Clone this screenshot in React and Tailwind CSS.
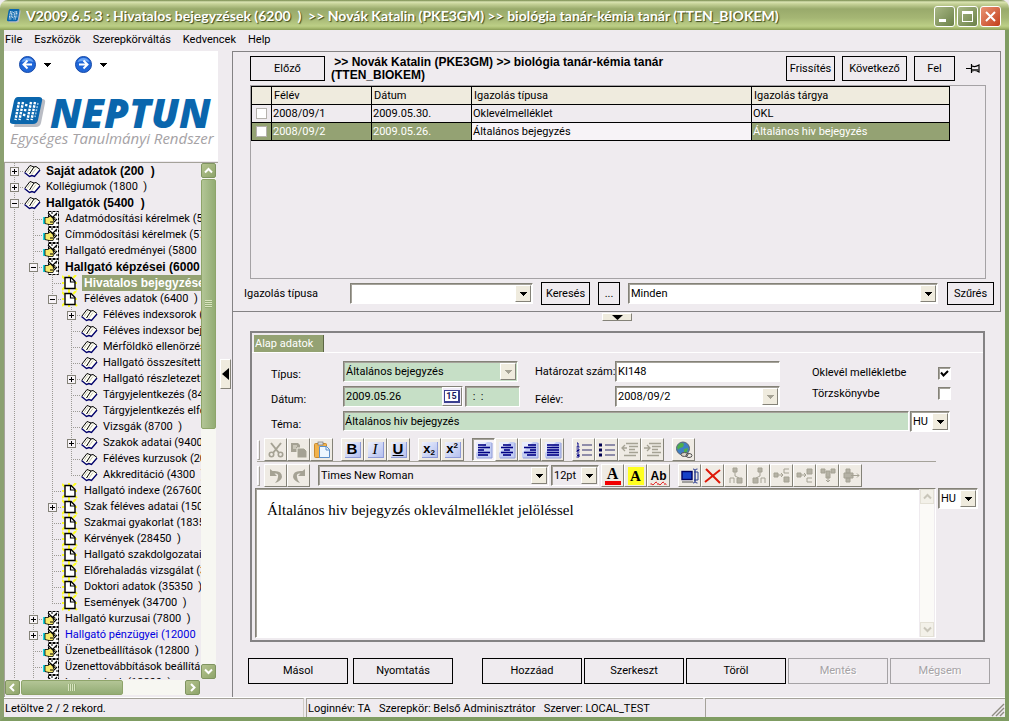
import { useState } from 'react';
import clsx from 'clsx';

// 3D edges of the classic controls
const SUNKEN = 'border border-t-[#848278] border-l-[#848278] border-r-white border-b-white shadow-[inset_1px_1px_0_#a5a29a]';
const RAISED = 'border border-t-white border-l-white border-r-[#848278] border-b-[#848278]';

const TREE = [
  { depth: 0, icon: 'book', label: 'Saját adatok (200  )', toggle: '+', bold: true },
  { depth: 0, icon: 'book', label: 'Kollégiumok (1800  )', toggle: '+' },
  { depth: 0, icon: 'book', label: 'Hallgatók (5400  )', toggle: '-', bold: true },
  { depth: 1, icon: 'hand', label: 'Adatmódosítási kérelmek (56' },
  { depth: 1, icon: 'hand', label: 'Címmódosítási kérelmek (57' },
  { depth: 1, icon: 'hand', label: 'Hallgató eredményei (5800  )' },
  { depth: 1, icon: 'hand', label: 'Hallgató képzései (6000', toggle: '-', bold: true },
  { depth: 2, icon: 'page', label: 'Hivatalos bejegyzése', bold: true, selected: true },
  { depth: 2, icon: 'page', label: 'Féléves adatok (6400  )', toggle: '-' },
  { depth: 3, icon: 'book', label: 'Féléves indexsorok (', toggle: '+' },
  { depth: 3, icon: 'book', label: 'Féléves indexsor bej' },
  { depth: 3, icon: 'book', label: 'Mérföldkö ellenörzés' },
  { depth: 3, icon: 'book', label: 'Hallgató összesített' },
  { depth: 3, icon: 'book', label: 'Hallgató részletezett', toggle: '+' },
  { depth: 3, icon: 'book', label: 'Tárgyjelentkezés (84' },
  { depth: 3, icon: 'book', label: 'Tárgyjelentkezés elfo' },
  { depth: 3, icon: 'book', label: 'Vizsgák (8700  )' },
  { depth: 3, icon: 'book', label: 'Szakok adatai (9400', toggle: '+' },
  { depth: 3, icon: 'book', label: 'Féléves kurzusok (20' },
  { depth: 3, icon: 'book', label: 'Akkreditáció (4300  )', last: true },
  { depth: 2, icon: 'page', label: 'Hallgató indexe (267600' },
  { depth: 2, icon: 'page', label: 'Szak féléves adatai (150', toggle: '+' },
  { depth: 2, icon: 'page', label: 'Szakmai gyakorlat (1835' },
  { depth: 2, icon: 'page', label: 'Kérvények (28450  )' },
  { depth: 2, icon: 'page', label: 'Hallgató szakdolgozatai' },
  { depth: 2, icon: 'page', label: 'Előrehaladás vizsgálat (3' },
  { depth: 2, icon: 'page', label: 'Doktori adatok (35350  )' },
  { depth: 2, icon: 'page', label: 'Események (34700  )', last: true },
  { depth: 1, icon: 'hand', label: 'Hallgató kurzusai (7800  )', toggle: '+' },
  { depth: 1, icon: 'hand', label: 'Hallgató pénzügyei (12000  )', toggle: '+', link: true },
  { depth: 1, icon: 'hand', label: 'Üzenetbeállítások (12800  )' },
  { depth: 1, icon: 'hand', label: 'Üzenettovábbítások beállítá' },
  { depth: 1, icon: 'hand', label: 'Levelezések (13800  )' },
];

const ROWS = [
  { term: '2008/09/1', date: '2009.05.30.', type: 'Oklevélmelléklet', subject: 'OKL' },
  { term: '2008/09/2', date: '2009.05.26.', type: 'Általános bejegyzés', subject: 'Általános hiv bejegyzés' },
];

/* ---------- icons ---------- */

const BookIcon = () => (
  <svg width="17" height="14" viewBox="0 0 17 14" aria-hidden="true">
    <path d="M1 8 6 1.500 10 3l2-.5 4 3-5.500 6.500L8 11l-2.500 1z" fill="#fffff4" />
    <path d="M1 8 6 1.500 10 3l2-.5 4 3M10 3 5.500 10" fill="none" stroke="#000" strokeWidth="1" />
    <path d="M.5 8.500 5.500 12.500 8 11.500l2.500 1L16 6" fill="none" stroke="#00006b" strokeWidth="1.400" />
    <path d="M7.500 10.500 12 4.500M3 8.500l4.500-6" stroke="#b5b2a5" strokeWidth=".8" />
  </svg>
);

const HandIcon = () => (
  <svg width="17" height="16" viewBox="0 0 17 16" aria-hidden="true">
    <path d="M5.500.5h10v15h-10z" fill="#fff" stroke="#000" strokeDasharray="3 1" />
    <path d="M0 6h3v7H0z" fill="#19d3df" />
    <path d="M2 6.500h3l3-2 1 2h3v2h-2l1 2-1 3H6l-4-1z" fill="#f7e96b" stroke="#000" strokeWidth=".8" />
    <path d="m5 2 6 6M14 2 9 7m5 1-3 3M7 11h3M12 4h2M13 12h2M8 2h2" stroke="#000" strokeWidth="1.100" />
  </svg>
);

const PageIcon = () => (
  <svg width="16" height="16" viewBox="0 0 16 16" aria-hidden="true">
    <path d="m0 1 3 3M14 0l-3 3M0 15l3-3M15 15l-3-3M7 0v2M0 8h2M15 8h-2M7 16v-2" stroke="#ffff21" strokeWidth="2" />
    <path d="M3 2.500h6l4 4v7H3z" fill="#fff" stroke="#000" strokeWidth="1.400" />
    <path d="M8.500 2.500v4.500H13" fill="none" stroke="#000" strokeWidth="1.200" />
  </svg>
);

const TREE_ICONS = { book: BookIcon, hand: HandIcon, page: PageIcon };

const Caret = ({ color = '#000' }) => (
  <svg width="7" height="4" viewBox="0 0 7 4" shapeRendering="crispEdges" aria-hidden="true">
    <path d="M0 0h7L3.500 4z" fill={color} />
  </svg>
);

const NeptunMark = ({ width, height }) => (
  <svg width={width} height={height} viewBox="0 0 36 31" preserveAspectRatio="none" className="shrink-0" aria-hidden="true">
    <path d="M9 2h23q4 0 3 4l-4 20q-1 4-5 4H4z" fill="#b9bcc4" />
    <path d="M8 0h21q4 0 3 4l-4 19q-1 4-5 4H3q-4 0-3-4L4 4q1-4 4-4z" fill="#0a66ad" />
    <path d="M9 5 5.500 23M13 5 9.500 23M25 5l-3.500 18M21 5l-3.500 18" stroke="#fff" strokeWidth="2.400" strokeDasharray="2.400 1" />
    <path d="m16.500 7-3 14" stroke="#fff" strokeWidth="2.400" strokeDasharray="2.400 2.600" />
    <path d="M28 6l-3 14" stroke="#9cc4e4" strokeWidth="1.500" strokeDasharray="2 1.200" />
  </svg>
);

const RoundArrow = ({ back }) => (
  <svg width="17" height="17" viewBox="0 0 17 17" aria-hidden="true">
    <circle cx="8.500" cy="8.500" r="8" fill="#1f66d8" stroke="#174aa8" />
    <path d="M2.500 6a6.500 6.500 0 0 1 12 0q-6-2-12 0z" fill="#6ba5f5" />
    <path
      d={back ? 'M13 8.500H5M8.500 4.500l-4 4 4 4' : 'M4 8.500h8M8.500 4.500l4 4-4 4'}
      fill="none" stroke="#fff" strokeWidth="2"
    />
  </svg>
);

const PinIcon = () => (
  <svg width="15" height="11" viewBox="0 0 15 11" aria-hidden="true">
    <path d="M0 5.500h5M5.500 1v9M6 3q3 1.500 7-1v7q-4-2.500-7-1" stroke="#000" strokeWidth="1.200" fill="none" />
    <path d="M6 6h7v2H6z" fill="#444" />
  </svg>
);

const Chevron = ({ dir, color = '#fff' }) => (
  <svg width="9" height="9" viewBox="0 0 9 9" fill="none" stroke={color} strokeWidth="2" aria-hidden="true">
    {dir === 'up' && <path d="M1 6.500 4.500 3 8 6.500" />}
    {dir === 'down' && <path d="M1 2.500 4.500 6 8 2.500" />}
    {dir === 'left' && <path d="M6 1 2.500 4.500 6 8" />}
    {dir === 'right' && <path d="M3 1l3.500 3.500L3 8" />}
  </svg>
);

const Ico = ({ children }) => (
  <svg width="18" height="18" viewBox="0 0 18 18" fill="none" aria-hidden="true">{children}</svg>
);

const BlueTile = ({ children }) => (
  <Ico>
    <rect x="1" y="1" width="16" height="16" rx="1" fill="#c3cdf3" />
    <path d="M1 1h11L1 12z" fill="#e9edfc" />
    <path d="M17 2v15H2" stroke="#8e9bd8" />
    {children}
  </Ico>
);

const GRAY = '#a5a294';

const GlyphTile = ({ children, className }) => (
  <span className={clsx("flex size-4 items-center justify-center border-r border-b border-[#8e9bd8] bg-linear-to-br from-[#eef1fd] to-[#b5c0ee] font-['Liberation_Sans',sans-serif] leading-4 text-black", className)}>
    {children}
  </span>
);

const CutIcon = () => (
  <Ico>
    <path d="m4 2 8 10M14 2 6 12" stroke={GRAY} strokeWidth="2" />
    <circle cx="4.500" cy="13.500" r="2.200" stroke={GRAY} strokeWidth="1.600" />
    <circle cx="13.500" cy="13.500" r="2.200" stroke={GRAY} strokeWidth="1.600" />
  </Ico>
);

const CopyIcon = () => (
  <Ico>
    <path d="M1 2h7l2 2v7H1z" fill={GRAY} />
    <path d="M7 7h7l3 3v7H7z" fill={GRAY} stroke="#f2efe4" />
    <path d="M3 5h4M3 7h3" stroke="#efebde" />
  </Ico>
);

const PasteIcon = () => (
  <Ico>
    <rect x="1.500" y="2.500" width="12" height="14" rx="1" fill="#f2b24a" stroke="#c98a2e" />
    <rect x="5" y="1" width="5" height="3" fill="#dedede" stroke="#777" strokeWidth=".7" />
    <path d="M6.500 5.500h7l3 3v8h-10z" fill="#eef7ff" stroke="#5c8fc9" />
    <path d="M13 5.500v3.500h3.500" stroke="#5c8fc9" />
  </Ico>
);

const AlignIcon = ({ lines }) => (
  <BlueTile>
    {lines.map(([x1, x2], i) => (
      <path key={i} d={`M${x1} ${4 + i * 2.5}H${x2}`} stroke="#000084" strokeWidth="1.600" />
    ))}
  </BlueTile>
);

const ALIGN_LEFT = [[3, 11], [3, 15], [3, 9], [3, 15], [3, 13]];
const ALIGN_CENTER = [[5, 13], [3, 15], [6, 12], [3, 15], [5, 13]];
const ALIGN_RIGHT = [[7, 15], [3, 15], [9, 15], [3, 15], [6, 15]];
const ALIGN_FULL = [[3, 15], [3, 15], [3, 15], [3, 15], [3, 15]];

const NumberedIcon = () => (
  <Ico>
    <path d="M7 4h10M7 9h10M7 14h10" stroke="#2f2f6e" strokeWidth="1.200" />
    <path d="M2 2h1v4M1.500 6h3M1.500 8H4v1.500H2V11h2.500M1.500 13H4v3H1.500M2 14.500h2" stroke="#000084" />
  </Ico>
);

const BulletIcon = () => (
  <Ico>
    <path d="M7 4h10M7 9h10M7 14h10" stroke="#2f2f6e" strokeWidth="1.200" />
    <path d="M1 2.500h3v3H1zM1 7.500h3v3H1zM1 12.500h3v3H1z" fill="#000050" />
  </Ico>
);

const IndentIcon = ({ right }) => (
  <Ico>
    <path d="M5 2.500h12M8 5.500h9M8 8.500h6M8 11.500h9M3 14.500h12" stroke={GRAY} strokeWidth="1.300" />
    <path d={right ? 'M0 7h5M3 4l3 3-3 3' : 'M6 7H1M4 4 1 7l3 3'} stroke={GRAY} strokeWidth="1.300" />
  </Ico>
);

const GlobeIcon = () => (
  <Ico>
    <circle cx="8" cy="7.500" r="6.500" fill="#3d7fc4" stroke="#5a6470" />
    <path d="M4 3q3-2 5 0l-1 3-3 1-2 2-1-3zM9 8l4-1-1 4-3 2z" fill="#4fae4a" />
    <ellipse cx="9.500" cy="13.500" rx="3.500" ry="2" fill="#d8d4c8" stroke="#555" />
    <ellipse cx="14" cy="14.500" rx="3" ry="2" stroke="#555" />
  </Ico>
);

const UndoIcon = ({ flip }) => (
  <Ico>
    <path
      d={flip ? 'M15 2v7H8l2.500-2.500Q6 6 7 10q0 3 3 6-6-2-7-6 0-7 9.500-6z' : 'M3 2v7h7L7.500 6.500Q12 6 11 10q0 3-3 6 6-2 7-6 0-7-9.500-6z'}
      fill={GRAY}
    />
  </Ico>
);

const ObjectIcon = () => (
  <Ico>
    <rect x="1" y="4.500" width="10" height="8" fill="#1640c8" stroke="#000060" strokeWidth="1.400" />
    <path d="M1 15h11" stroke="#555" />
    <path d="M12 2q2 0 2 1.500v11q0 1.500-2 1.500M16.500 2Q14 2 14 3.500v11q0 1.500 2.500 1.500M13 5h4v8h-4" stroke="#2b3c90" />
  </Ico>
);

const DeleteIcon = () => (
  <Ico><path d="m2 2 14 14M16 3 1 15" stroke="#de1808" strokeWidth="2" /></Ico>
);

// gray table commands, always disabled here
const TABLE_ICONS = [
  <g key="a"><path d="M6 1h4v4H6zM10 11h5v5h-5z" /><path d="M3 16v-5h4v5M8 5v4M8 9l4 2" fill="none" /></g>,
  <g key="b"><path d="M8 1h4v4H8zM3 11h5v5H3z" /><path d="M11 16v-5h4v5M10 5v4M10 9l-4 2" fill="none" /></g>,
  <g key="c"><path d="M1 6h4v4H1zM11 10h5v5h-5z" /><path d="M16 2h-5v4h5M5 8h5M8 6l2 2-2 2" fill="none" /></g>,
  <g key="d"><path d="M1 6h4v4H1zM11 2h5v5h-5z" /><path d="M16 11h-5v4h5M5 8h5M8 6l2 2-2 2" fill="none" /></g>,
  <g key="e"><path d="M2 2h4v4H2zM12 2h4v4h-4zM7 4h4v7H7z" /><path d="M9 9v6M7 13l2 2 2-2" fill="none" /></g>,
  <g key="f"><path d="M4 2h4v4H4zM4 11h4v4H4zM2 6h9v5H2z" /><path d="M9 8.500h8M15 6.500l2 2-2 2" fill="none" /></g>,
];

const SizeGrip = () => (
  <svg width="14" height="14" viewBox="0 0 14 14" aria-hidden="true">
    <path d="M1 13 13 1M5 13l8-8M9 13l4-4" stroke="#8f8c82" strokeWidth="1.400" />
  </svg>
);

/* ---------- controls ---------- */

const FlatButton = ({ children, className, disabled }) => (
  <button
    type="button"
    disabled={disabled}
    className={clsx(
      'shrink-0 border text-center',
      disabled ? 'border-[#a5a2a5] text-[#a5a2a5] [text-shadow:1px_1px_0_#fff]' : 'border-black',
      className,
    )}
  >
    {children}
  </button>
);

const Combo = ({ id, value, label, className, disabled, tone = 'bg-white' }) => (
  <div className={clsx('relative flex h-[21px] shrink-0', SUNKEN, tone, className)}>
    <select
      id={id}
      aria-label={label}
      disabled={disabled}
      className="w-full appearance-none bg-transparent pr-4 pl-[2px] text-black opacity-100 outline-none"
    >
      <option>{value}</option>
    </select>
    <span className={clsx('pointer-events-none absolute inset-y-px right-px flex w-4 items-center justify-center bg-[#efebde]', RAISED)}>
      <Caret color={disabled ? '#a5a294' : '#000'} />
    </span>
  </div>
);

const Check = ({ id, defaultChecked }) => (
  <span className={clsx('grid size-[13px] bg-white', SUNKEN)}>
    <input id={id} type="checkbox" defaultChecked={defaultChecked} className="peer col-start-1 row-start-1 size-[11px] appearance-none" />
    <svg viewBox="0 0 11 11" className="pointer-events-none invisible col-start-1 row-start-1 size-[11px] peer-checked:visible" aria-hidden="true">
      <path d="m2 4.500 2.500 3L9 3" stroke="#000" strokeWidth="2" fill="none" />
    </svg>
  </span>
);

const ToolButton = ({ label, pressed, disabled, children }) => (
  <button
    type="button"
    aria-label={label}
    disabled={disabled}
    className={clsx('flex h-[23px] w-[23px] shrink-0 items-center justify-center', pressed ? SUNKEN : RAISED, pressed ? 'bg-[#f7f3f7]' : 'bg-[#efebe4]')}
  >
    {children}
  </button>
);

const ToolGroup = ({ children }) => <div className="flex">{children}</div>;

const Grip = () => <span className="h-5 w-[3px] shrink-0 border border-t-white border-r-[#a5a29a] border-b-[#a5a29a] border-l-white" />;

const ScrollButton = ({ dir, label }) => (
  <button
    type="button"
    aria-label={label}
    className="flex size-[15px] shrink-0 items-center justify-center rounded-xs border border-[#7f9460] bg-linear-to-br from-[#b5c48f] to-[#8ea46a]"
  >
    <Chevron dir={dir} />
  </button>
);

/* ---------- window parts ---------- */

const TitleBar = () => (
  <header className="flex h-[30px] shrink-0 items-center rounded-t-lg bg-[linear-gradient(#74874a_0,#dbe4b4_2px,#c5d197_4px,#99aa6b_9px,#a5b674_18px,#bccf86_26px,#a8bb70_28px,#8a9e58_30px)] pt-[2px] pr-[8px] pl-[7px]">
    <NeptunMark width={14} height={14} />
    <h1 className="ml-[5px] flex-1 overflow-hidden font-['Lato','Open_Sans',sans-serif] text-[14px] leading-5 font-bold whitespace-pre text-white [text-shadow:1px_1px_1px_#3d4a1c]">
      {'V2009.6.5.3 : Hivatalos bejegyzések (6200  )  >> Novák Katalin (PKE3GM) >> biológia tanár-kémia tanár (TTEN_BIOKEM)'}
    </h1>
    <div className="flex gap-[2px]">
      <button type="button" aria-label="Minimize" className="flex size-[21px] items-end rounded-[3px] border border-white bg-linear-to-br from-[#a9b886] to-[#6c8148] pb-1 pl-1">
        <span className="h-[3px] w-[7px] bg-white" />
      </button>
      <button type="button" aria-label="Maximize" className="flex size-[21px] items-center justify-center rounded-[3px] border border-white bg-linear-to-br from-[#a9b886] to-[#6c8148]">
        <span className="size-[11px] border border-t-[3px] border-white" />
      </button>
      <button type="button" aria-label="Close" className="flex size-[21px] items-center justify-center rounded-[3px] border border-white bg-linear-to-br from-[#e89373] to-[#c23c14]">
        <svg width="11" height="11" viewBox="0 0 11 11" aria-hidden="true"><path d="m1 1 9 9M10 1l-9 9" stroke="#fff" strokeWidth="2" /></svg>
      </button>
    </div>
  </header>
);

const MenuBar = () => (
  <nav className="flex h-[21px] shrink-0 items-center gap-3 pb-[2px] pl-px">
    {['File', 'Eszközök', 'Szerepkörváltás', 'Kedvencek', 'Help'].map((item) => (
      <button key={item} type="button">{item}</button>
    ))}
  </nav>
);

// dotted connector in one indent cell
const Guide = ({ kind }) => (
  <svg width="19" height="16" viewBox="0 0 19 16" className="shrink-0" shapeRendering="crispEdges" aria-hidden="true">
    <path d={kind === 'last' ? 'M9.500 0v8' : 'M9.500 0v16'} stroke="#9c9a94" strokeDasharray="1 1" />
    {kind !== 'line' && <path d="M9 8.500h10" stroke="#9c9a94" strokeDasharray="1 1" />}
  </svg>
);

const Expander = ({ sign }) => (
  <svg width="19" height="16" viewBox="0 0 19 16" className="shrink-0" shapeRendering="crispEdges" aria-hidden="true">
    <path d="M9.500 0v16M9 8.500h10" stroke="#9c9a94" strokeDasharray="1 1" />
    <rect x="5.500" y="4.500" width="8" height="8" fill="#f7f3f7" stroke="#848278" />
    <path d={sign === '+' ? 'M7 8.500h5M9.500 6v5' : 'M7 8.500h5'} stroke="#000" />
  </svg>
);

const TreeRow = ({ node }) => {
  const Icon = TREE_ICONS[node.icon];
  return (
    <li className="flex h-4 items-center whitespace-pre">
      {Array.from({ length: node.depth }, (_, i) => <Guide key={i} kind="line" />)}
      {node.toggle ? <Expander sign={node.toggle} /> : <Guide kind={node.last ? 'last' : 'mid'} />}
      <span className="flex w-5 shrink-0"><Icon /></span>
      <span
        className={clsx(
          'h-4 flex-1 pl-[2px] leading-4',
          node.bold && "font-['Liberation_Sans',Arial,sans-serif] text-[12px] font-bold",
          node.selected && 'bg-[#94a273] text-white',
          node.link && 'text-[#0000e0]',
        )}
      >
        {node.label}
      </span>
    </li>
  );
};

const Sidebar = () => (
  <aside className="flex w-[214px] shrink-0 flex-col">
    <div className="h-[110px] shrink-0 bg-white">
      <div className="flex items-center pt-[5px] pl-[15px]">
        <button type="button" aria-label="Vissza"><RoundArrow back /></button>
        <span className="ml-2"><Caret /></span>
        <button type="button" aria-label="Előre" className="ml-[24px]"><RoundArrow /></button>
        <span className="ml-2"><Caret /></span>
      </div>
      <div className="mt-[22px] flex h-[35px] items-center gap-1 pl-[6px] font-['Open_Sans',sans-serif] italic">
        <NeptunMark width={36} height={31} />
        <span className="text-[40px] leading-[35px] font-extrabold text-[#0a66ad]">NEPTUN</span>
      </div>
      <p className="pl-[6px] font-['Open_Sans',sans-serif] text-[15px] leading-4 whitespace-nowrap text-[#a5a2a5] italic">
        Egységes Tanulmányi Rendszer
      </p>
    </div>
    <div className="mt-px flex min-h-0 flex-1 flex-col border-t border-l border-[#a5a29a] pr-[2px] pb-[2px]">
      <div className="flex min-h-0 flex-1">
        <ul className="h-0 min-h-full min-w-0 flex-1 overflow-hidden">
          {TREE.map((node) => <TreeRow key={node.label} node={node} />)}
        </ul>
        <div className="flex w-[15px] shrink-0 flex-col bg-[#f7f7f2]">
          <ScrollButton dir="up" label="Fel görget" />
          <div className="mt-px flex h-[250px] items-center justify-center rounded-xs border border-[#8ea46a] bg-linear-to-r from-[#b3c596] to-[#93ac74]">
            <span className="h-2 w-[7px] bg-[repeating-linear-gradient(#d9e4c0_0_1px,#93ac74_1px_2px)]" />
          </div>
          <div className="flex-1" />
          <ScrollButton dir="down" label="Le görget" />
        </div>
      </div>
      <div className="mt-px mr-4 flex h-[15px] shrink-0 bg-[#f7f7f2]">
        <ScrollButton dir="left" label="Balra görget" />
        <div className="ml-px flex w-[102px] items-center justify-center rounded-xs border border-[#8ea46a] bg-linear-to-b from-[#b3c596] to-[#93ac74]">
          <span className="h-[7px] w-2 bg-[repeating-linear-gradient(90deg,#d9e4c0_0_1px,#93ac74_1px_2px)]" />
        </div>
        <div className="flex-1" />
        <ScrollButton dir="right" label="Jobbra görget" />
      </div>
    </div>
  </aside>
);

const RecordList = () => {
  const [selected] = useState(1);
  return (
    <div className="h-[194px] border border-[#a5a2a5]">
      <table className="w-[699px] table-fixed border-collapse">
        <thead>
          <tr className="h-[18px] bg-[#efebde] text-left">
            <th className="w-5 border border-black" aria-label="Kijelölés" />
            <th className="w-[100px] border border-black px-[2px] leading-4 font-normal">Félév</th>
            <th className="w-[100px] border border-black px-[2px] leading-4 font-normal">Dátum</th>
            <th className="w-[280px] border border-black px-[2px] leading-4 font-normal">Igazolás típusa</th>
            <th className="border border-black px-[2px] leading-4 font-normal">Igazolás tárgya</th>
          </tr>
        </thead>
        <tbody>
          {ROWS.map((row, i) => (
            <tr key={row.term} className={clsx('h-[18px]', i === selected && 'bg-[#94a273] text-white')}>
              <td className="border border-black p-0">
                <input type="checkbox" aria-label={row.term} className="mx-auto block size-[11px] appearance-none border border-[#b5b2ad] bg-white" />
              </td>
              <td className="border border-black px-px leading-4">{row.term}</td>
              <td className="border border-black px-px leading-4">{row.date}</td>
              <td className={clsx('border border-black px-px leading-4', i === selected && 'bg-[#f7f3f7] text-black')}>{row.type}</td>
              <td className="border border-black px-px leading-4">{row.subject}</td>
            </tr>
          ))}
        </tbody>
      </table>
    </div>
  );
};

const ListPanel = () => (
  <section className="shrink-0 border border-l-0 border-[#848284] pt-1 pb-[6px]">
    <div className="flex items-start pr-[19px] pl-[17px]">
      <FlatButton className="h-[25px] w-[75px]">Előző</FlatButton>
      <p className="ml-[6px] w-[400px] font-['Liberation_Sans',Arial,sans-serif] text-[12px] leading-[13px] font-bold whitespace-pre-wrap">
        {' >> Novák Katalin (PKE3GM) >> biológia tanár-kémia tanár (TTEN_BIOKEM)'}
      </p>
      <div className="ml-auto flex items-center gap-[7px]">
        <FlatButton className="h-[25px] w-[49px]">Frissítés</FlatButton>
        <FlatButton className="h-[25px] w-[65px]">Következő</FlatButton>
        <FlatButton className="h-[25px] w-[41px]">Fel</FlatButton>
        <button type="button" aria-label="Rögzít" className="ml-1"><PinIcon /></button>
      </div>
    </div>
    <div className="mt-[3px] mr-[14px] ml-[17px]">
      <RecordList />
    </div>
    <div className="mt-[3px] flex items-center pr-[6px] pl-[11px]">
      <label htmlFor="kereses" className="w-[106px]">Igazolás típusa</label>
      <Combo id="kereses" value="" className="w-[183px]" />
      <FlatButton className="ml-2 h-[23px] w-[49px]">Keresés</FlatButton>
      <FlatButton className="ml-2 h-[23px] w-[22px]">...</FlatButton>
      <Combo label="Szűrő" value="Minden" className="ml-2 min-w-0 flex-1 shrink" />
      <FlatButton className="ml-[9px] h-[23px] w-[47px]">Szűrés</FlatButton>
    </div>
  </section>
);

const Toolbar = () => (
  <div className="flex flex-col gap-[2px]">
    <div className="mr-[4px] flex items-center gap-2 border-b border-[#a5a29a]">
      <div className="flex items-center gap-1">
        <Grip />
        <ToolGroup>
          <ToolButton label="Kivágás" disabled><CutIcon /></ToolButton>
          <ToolButton label="Másolás" disabled><CopyIcon /></ToolButton>
          <ToolButton label="Beillesztés"><PasteIcon /></ToolButton>
        </ToolGroup>
      </div>
      <ToolGroup>
        <ToolButton label="Félkövér"><GlyphTile className="text-[15px] font-bold">B</GlyphTile></ToolButton>
        <ToolButton label="Dőlt"><GlyphTile className="font-['Liberation_Serif',serif] text-[15px] italic">I</GlyphTile></ToolButton>
        <ToolButton label="Aláhúzott"><GlyphTile className="text-[15px] font-bold underline">U</GlyphTile></ToolButton>
      </ToolGroup>
      <ToolGroup>
        <ToolButton label="Alsó index"><GlyphTile className="text-[13px] font-bold">x<span className="self-end text-[8px] leading-[8px]">2</span></GlyphTile></ToolButton>
        <ToolButton label="Felső index"><GlyphTile className="text-[13px] font-bold">x<span className="self-start text-[8px] leading-[8px]">2</span></GlyphTile></ToolButton>
      </ToolGroup>
      <ToolGroup>
        <ToolButton label="Balra" pressed><AlignIcon lines={ALIGN_LEFT} /></ToolButton>
        <ToolButton label="Középre"><AlignIcon lines={ALIGN_CENTER} /></ToolButton>
        <ToolButton label="Jobbra"><AlignIcon lines={ALIGN_RIGHT} /></ToolButton>
        <ToolButton label="Sorkizárt"><AlignIcon lines={ALIGN_FULL} /></ToolButton>
      </ToolGroup>
      <ToolGroup>
        <ToolButton label="Számozás"><NumberedIcon /></ToolButton>
        <ToolButton label="Felsorolás"><BulletIcon /></ToolButton>
        <ToolButton label="Behúzás csökkentése" disabled><IndentIcon /></ToolButton>
        <ToolButton label="Behúzás növelése" disabled><IndentIcon right /></ToolButton>
      </ToolGroup>
      <ToolButton label="Hivatkozás"><GlobeIcon /></ToolButton>
    </div>
    <div className="flex items-center gap-2">
      <div className="flex items-center gap-1">
        <Grip />
        <ToolGroup>
          <ToolButton label="Visszavonás" disabled><UndoIcon /></ToolButton>
          <ToolButton label="Ismét" disabled><UndoIcon flip /></ToolButton>
        </ToolGroup>
      </div>
      <div className="flex items-center gap-[2px]">
        <Combo label="Betűtípus" value="Times New Roman" className="w-[231px]" tone="bg-[#efebef]" />
        <Combo label="Méret" value="12pt" className="w-[48px]" tone="bg-[#efebef]" />
        <ToolGroup>
          <ToolButton label="Betűszín">
            <span className="h-[18px] w-4 border-b-4 border-[#f00000] text-center font-['Liberation_Serif',serif] text-[16px] leading-[14px] font-bold">A</span>
          </ToolButton>
          <ToolButton label="Kiemelés">
            <span className="h-[18px] w-4 bg-[#ffff21] text-center font-['Liberation_Serif',serif] text-[15px] leading-[18px] font-bold">A</span>
          </ToolButton>
          <ToolButton label="Helyesírás">
            <span className="font-['Liberation_Sans',sans-serif] text-[12px] leading-[14px] font-bold underline decoration-[#e00000] decoration-wavy decoration-1">Ab</span>
          </ToolButton>
        </ToolGroup>
      </div>
      <ToolGroup>
        <ToolButton label="Objektum"><ObjectIcon /></ToolButton>
        <ToolButton label="Törlés"><DeleteIcon /></ToolButton>
        {TABLE_ICONS.map((icon, i) => (
          <ToolButton key={i} label={`Táblázat ${i + 1}`} disabled>
            <svg width="18" height="18" viewBox="0 0 18 18" fill="#b5b2a5" stroke="#a5a294" aria-hidden="true">{icon}</svg>
          </ToolButton>
        ))}
      </ToolGroup>
    </div>
  </div>
);

const Editor = () => (
  <div className={clsx('flex min-w-0 flex-1 bg-white', SUNKEN)}>
    <textarea
      aria-label="Szöveg"
      className="min-w-0 flex-1 resize-none overflow-hidden px-[11px] py-3 font-['Liberation_Serif',serif] text-[15px] leading-[18px] outline-none"
      defaultValue="Általános hiv bejegyzés okleválmelléklet jelöléssel"
    />
    <div className="flex w-4 shrink-0 flex-col justify-between border-x border-[#efebef] bg-[#fbfaf7]">
      <button type="button" aria-label="Fel görget" disabled className="flex h-[15px] items-center justify-center border border-[#e4e1d6] bg-[#f3f1e9]"><Chevron dir="up" color="#c9c6ba" /></button>
      <button type="button" aria-label="Le görget" disabled className="flex h-[15px] items-center justify-center border border-[#e4e1d6] bg-[#f3f1e9]"><Chevron dir="down" color="#c9c6ba" /></button>
    </div>
  </div>
);

const DetailForm = () => (
  <div className="grid grid-cols-[72px_177px_95px_165px_32px_126px_1fr] gap-y-[3px] pl-[17px]">
    <label htmlFor="tipus" className="pt-[6px]">Típus:</label>
    <Combo id="tipus" value="Általános bejegyzés" disabled className="mr-[2px]" tone="bg-[#c6dfc6]" />
    <label htmlFor="hatarozat" className="pt-[3px] pl-[15px] whitespace-nowrap">Határozat szám:</label>
    <input id="hatarozat" defaultValue="KI148" className={clsx('h-[21px] bg-white px-[2px]', SUNKEN)} />
    <span />
    <label htmlFor="oklevel" className="pt-1">Oklevél mellékletbe</label>
    <span className="pt-[6px]"><Check id="oklevel" defaultChecked /></span>

    <label htmlFor="datum" className="pt-[6px]">Dátum:</label>
    <div className="flex gap-[2px]">
      <div className={clsx('flex h-[21px] w-[120px] bg-[#c6dfc6]', SUNKEN)}>
        <input id="datum" defaultValue="2009.05.26" className="min-w-0 flex-1 px-[2px]" />
        <button type="button" aria-label="Naptár" className={clsx('flex w-5 items-center justify-center bg-[#efebf7]', RAISED)}>
          <span className="border border-r-2 border-b-2 border-[#3b3f8f] bg-white px-px text-[9px] leading-[10px] font-bold text-[#1a1a60]">15</span>
        </button>
      </div>
      <input aria-label="Idő" defaultValue=" :  :" className={clsx('h-[21px] w-[55px] bg-[#c6dfc6] px-1', SUNKEN)} />
    </div>
    <label htmlFor="felev" className="pt-[6px] pl-[15px]">Félév:</label>
    <Combo id="felev" value="2008/09/2" disabled />
    <span />
    <label htmlFor="torzskonyv">Törzskönyvbe</label>
    <span className="pt-px"><Check id="torzskonyv" /></span>

    <label htmlFor="tema" className="pt-[6px]">Téma:</label>
    <div className="col-span-6 flex gap-px pr-[32px]">
      <input id="tema" defaultValue="Általános hiv bejegyzés" className={clsx('h-[20px] min-w-0 flex-1 bg-[#c6dfc6] px-px', SUNKEN)} />
      <Combo label="Téma nyelve" value="HU" className="w-[40px]" />
    </div>
  </div>
);

const DetailPanel = () => (
  <section className="flex min-h-0 flex-1 flex-col">
    <button type="button" aria-label="Lista elrejtése" className={clsx('mx-auto mt-px flex h-2 w-[30px] shrink-0 items-center justify-center bg-[#efebde]', RAISED)}>
      <svg width="11" height="5" viewBox="0 0 11 5" aria-hidden="true"><path d="M0 0h11L5.500 5z" /></svg>
    </button>
    <div className="mt-[10px] mr-[16px] ml-[17px] flex min-h-0 flex-1 flex-col border-2 border-[#848284]">
      <div role="tablist" className="flex h-5 shrink-0 border-b border-white pt-[2px] pl-[2px]">
        <button role="tab" type="button" aria-selected="true" className="w-[70px] border-r border-[#5c6644] bg-[#94a273] pl-px text-left leading-[17px] text-white">Alap adatok</button>
      </div>
      <div className="mr-px flex min-h-0 flex-1 flex-col pt-[8px] pl-[2px]">
        <DetailForm />
        <div className="mt-[5px] flex min-h-0 flex-1 flex-col pb-[2px]">
          <div className="mr-[42px] pl-[3px]"><Toolbar /></div>
          <div className="mt-px flex min-h-0 flex-1 items-start gap-[2px] pr-1 pl-px">
            <div className="flex min-w-0 flex-1 self-stretch"><Editor /></div>
            <Combo label="Szöveg nyelve" value="HU" className="w-[40px]" />
          </div>
        </div>
      </div>
    </div>
    <div className="mt-4 mb-[13px] flex shrink-0 gap-[2px] pr-[11px] pl-[15px]">
      <FlatButton className="h-[26px] w-[100px]">Másol</FlatButton>
      <FlatButton className="ml-[3px] h-[26px] w-[100px]">Nyomtatás</FlatButton>
      <span className="flex-1" />
      <FlatButton className="h-[26px] w-[100px]">Hozzáad</FlatButton>
      <FlatButton className="h-[26px] w-[100px]">Szerkeszt</FlatButton>
      <FlatButton className="h-[26px] w-[100px]">Töröl</FlatButton>
      <FlatButton className="h-[26px] w-[100px]" disabled>Mentés</FlatButton>
      <FlatButton className="h-[26px] w-[100px]" disabled>Mégsem</FlatButton>
    </div>
  </section>
);

const StatusBar = () => (
  <footer className="flex h-[20px] shrink-0 gap-[2px] border-t border-white leading-[20px] whitespace-pre">
    <span className="w-[300px] border-t border-r border-t-[#a5a29a] border-r-[#cfccc6] pl-px">Letöltve 2 / 2 rekord.</span>
    <span className="w-[397px] border-t border-l border-[#a5a29a] pl-px">Loginnév: TA   Szerepkör: Belső Adminisztrátor   Szerver: LOCAL_TEST</span>
    <span className="flex flex-1 items-end justify-end border-t border-l border-[#a5a29a]"><SizeGrip /></span>
  </footer>
);

export default function App() {
  return (
    <div className="flex h-screen min-h-[640px] flex-col bg-[#efebef] font-['Roboto','Liberation_Sans',sans-serif] text-[11px] leading-4 text-black">
      <TitleBar />
      <div className="flex min-h-0 flex-1 flex-col border-x-4 border-b-4 border-r-[#7f9c62] border-b-[#7f9c62] border-l-[#8ba070]">
        <MenuBar />
        <main className="flex min-h-0 flex-1">
          <Sidebar />
          <div className="flex w-[14px] shrink-0 items-center pl-[2px]">
            <button type="button" aria-label="Menü elrejtése" className={clsx('flex h-[30px] w-[11px] items-center justify-center bg-[#efebde]', RAISED)}>
              <svg width="7" height="12" viewBox="0 0 7 12" aria-hidden="true"><path d="M7 0v12L0 6z" /></svg>
            </button>
          </div>
          <div className="mr-1 flex min-w-0 flex-1 flex-col border-l border-[#848284]">
            <ListPanel />
            <DetailPanel />
          </div>
        </main>
        <StatusBar />
      </div>
    </div>
  );
}
